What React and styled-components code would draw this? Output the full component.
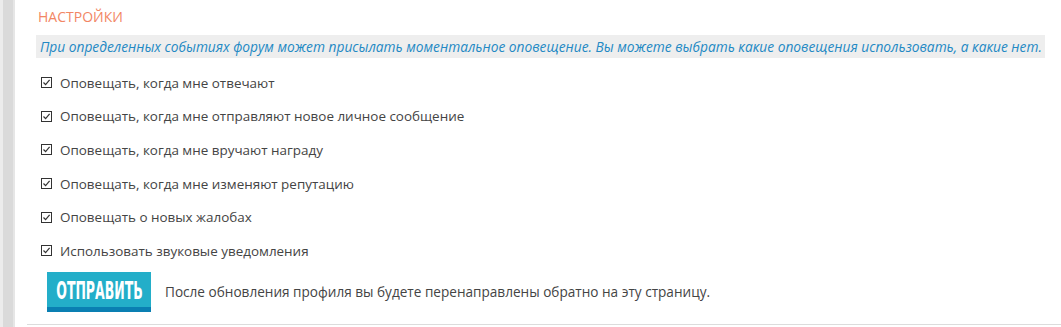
import React from "react";
import styled, { createGlobalStyle } from "styled-components";

const Global = createGlobalStyle`
  html, body { margin: 0; padding: 0; background: #fff; }
  body { font-family: "Open Sans", "Noto Sans", sans-serif; }
`;

const Page = styled.div`
  display: flex;
  height: 327px;
  overflow: hidden;
`;

const Sidebar = styled.div`
  width: 10px;
  flex: none;
  background: #dadada;
  border-left: 3px solid #ececec;
  border-right: 2px solid #e6e6e6;
`;

const Main = styled.div`
  flex: 1;
  margin-left: 12px;
  height: 325px;
  border-bottom: 1px solid #dcdcdc;
  padding-left: 9px;
  box-sizing: border-box;
`;

const Title = styled.h2`
  margin: 0;
  padding: 8px 0 0 2px;
  height: 35px;
  box-sizing: border-box;
  font-size: 14px;
  line-height: 18px;
  font-weight: 400;
  color: #f28664;
  text-transform: uppercase;
`;

const Info = styled.div`
  margin-right: 16px;
  height: 23px;
  background: #eeeeee;
  padding-left: 4px;
  font-size: 13.75px;
  line-height: 23px;
  font-style: italic;
  color: #2389c4;
  white-space: nowrap;
`;

const List = styled.div`
  display: flex;
  flex-direction: column;
  padding-top: 8px;
`;

const Row = styled.label`
  display: flex;
  align-items: center;
  gap: 8px;
  height: 33.6px;
  padding-left: 5px;
  font-size: 13.45px;
  color: #444;
`;

const Box = styled.span`
  width: 11px;
  height: 11px;
  box-sizing: border-box;
  border: 1px solid #333;
  background: #fff;
  display: inline-flex;
  align-items: center;
  justify-content: center;
  flex: none;
`;

const Actions = styled.div`
  display: flex;
  align-items: center;
  gap: 14px;
  padding-left: 11px;
  margin-top: 4px;
`;

const Button = styled.button`
  width: 104px;
  height: 40px;
  flex: none;
  border: none;
  border-bottom: 5px solid #0a7fb2;
  background: #23aec9;
  color: #fff;
  padding: 0;
  display: flex;
  align-items: center;
  justify-content: center;
  overflow: hidden;
  cursor: pointer;
`;

const ButtonText = styled.span`
  display: inline-block;
  font-family: "DejaVu Sans", sans-serif;
  font-size: 25px;
  line-height: 1;
  font-weight: 700;
  white-space: nowrap;
  transform: scaleX(0.5);
  margin-top: 3px;
`;

const Note = styled.span`
  font-size: 13.6px;
  color: #444;
  white-space: nowrap;
`;

const Check = () => (
  <Box>
    <svg width="9" height="9" viewBox="0 0 9 9">
      <path d="M1.5 4.5 L3.6 6.6 L7.6 1.8" fill="none" stroke="#333" strokeWidth="1.2" />
    </svg>
  </Box>
);

const items = [
  "Оповещать, когда мне отвечают",
  "Оповещать, когда мне отправляют новое личное сообщение",
  "Оповещать, когда мне вручают награду",
  "Оповещать, когда мне изменяют репутацию",
  "Оповещать о новых жалобах",
  "Использовать звуковые уведомления",
];

export default function App() {
  return (
    <>
      <Global />
      <Page>
        <Sidebar />
        <Main>
          <Title>Настройки</Title>
          <Info>
            При определенных событиях форум может присылать моментальное оповещение. Вы можете выбрать какие оповещения использовать, а какие нет.
          </Info>
          <List>
            {items.map((t) => (
              <Row key={t}>
                <Check />
                {t}
              </Row>
            ))}
          </List>
          <Actions>
            <Button>
              <ButtonText>ОТПРАВИТЬ</ButtonText>
            </Button>
            <Note>После обновления профиля вы будете перенаправлены обратно на эту страницу.</Note>
          </Actions>
        </Main>
      </Page>
    </>
  );
}
